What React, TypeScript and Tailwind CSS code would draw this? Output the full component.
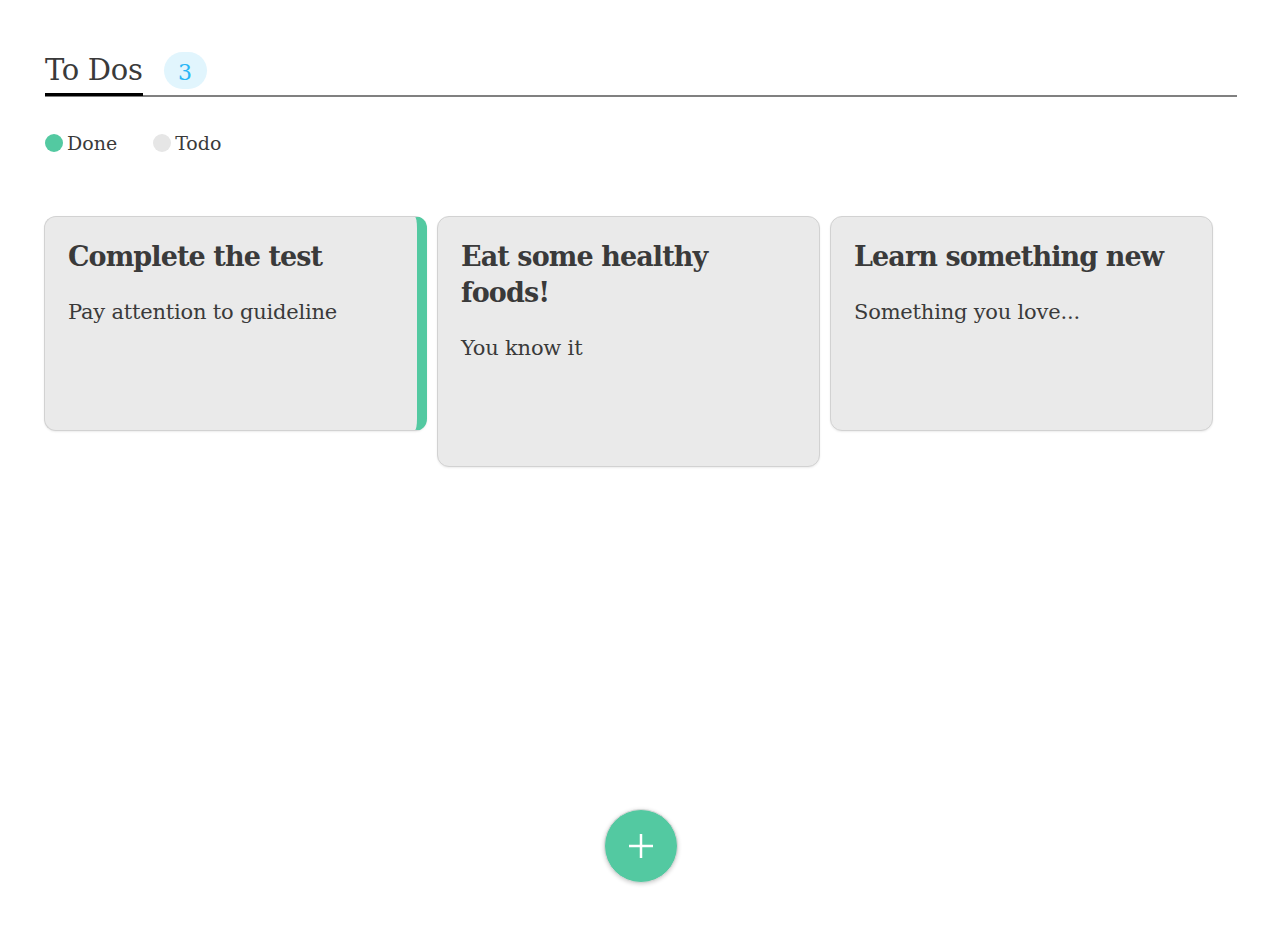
import React from "react"

const todos = [
  { title: "Complete the test", desc: "Pay attention to guideline", done: true },
  { title: "Eat some healthy foods!", desc: "You know it", done: false },
  { title: "Learn something new", desc: "Something you love...", done: false },
]

const serif = { fontFamily: '"DejaVu Serif", "Liberation Serif", serif' }

function TodoCard({ title, desc, done }: { title: string; desc: string; done: boolean }) {
  return (
    <div
      className={`w-[383px] rounded-xl border border-[#d2d2d2] bg-[#eaeaea] pl-[23px] pt-[22px] pb-[102px] shadow-[0_1px_2px_rgba(0,0,0,0.08)] ${
        done ? "border-r-[10px] border-r-[#53c9a1] pr-[12px]" : "pr-[22px]"
      }`}
    >
      <h2 className="text-[27px] font-bold leading-[36px] text-[#3a3a3a] tracking-[-0.9px]">{title}</h2>
      <p className="mt-[21px] text-[21px] leading-[32px] text-[#3a3a3a] tracking-[-0.2px]">{desc}</p>
    </div>
  )
}

export default function App() {
  return (
    <div className="min-h-[926px] bg-white px-[45px] pt-[51px] relative" style={serif}>
      {/* Header */}
      <div className="flex items-end border-b-2 border-[#808080]">
        <div className="border-b-[3px] border-black pb-[4px] text-[29px] leading-[38px] text-[#3a3a3a] tracking-[-0.3px] mb-[-1px]">
          To Dos
        </div>
        <div className="ml-[21px] mb-[6px] flex h-[37px] w-[43px] items-center justify-center rounded-full bg-[#e1f5fd] pt-[3px] text-[22px] text-[#29b6f6]">
          3
        </div>
      </div>

      {/* Legend */}
      <div className="mt-[32px] flex items-center gap-[36px] text-[19px] text-[#3a3a3a]">
        <div className="flex items-center gap-[4px]">
          <span className="inline-block h-[18px] w-[18px] rounded-full bg-[#53c9a1]" />
          Done
        </div>
        <div className="flex items-center gap-[4px]">
          <span className="inline-block h-[18px] w-[18px] rounded-full bg-[#e6e6e6]" />
          Todo
        </div>
      </div>

      {/* Cards */}
      <div className="mt-[58px] -ml-px flex items-start gap-[10px]">
        {todos.map((t) => (
          <TodoCard key={t.title} {...t} />
        ))}
      </div>

      {/* Add button */}
      <button className="absolute left-[604px] top-[809px] flex h-[74px] w-[74px] items-center justify-center rounded-full border border-[#d8d8d8] bg-[#53c9a1] shadow-[0_1px_4px_rgba(0,0,0,0.2)]">
        <svg width="28" height="28" viewBox="0 0 28 28" fill="none" stroke="white" strokeWidth="2.5">
          <path d="M14 2v24M2 14h24" />
        </svg>
      </button>
    </div>
  )
}
